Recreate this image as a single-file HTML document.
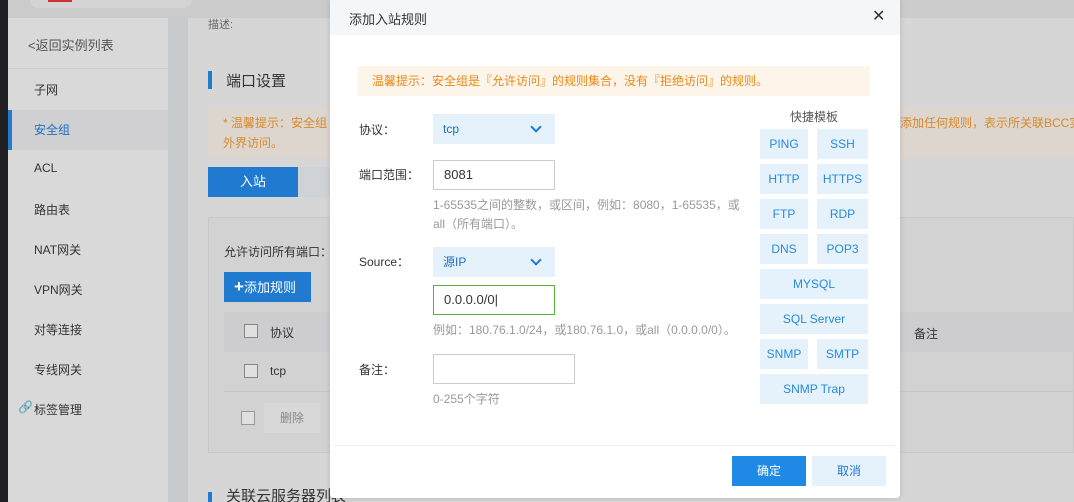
<!DOCTYPE html>
<html><head><meta charset="utf-8"><style>
*{margin:0;padding:0;box-sizing:border-box}
html,body{width:1074px;height:502px;overflow:hidden}
body{position:relative;background:#d6d6d6;font-family:"Liberation Sans","Noto Sans CJK SC",sans-serif;font-size:12px;color:#333}
.a{position:absolute}
.side div.it{position:absolute;left:34px;font-size:12px;color:#333}
.qb{position:absolute;background:#e6f2fb;color:#2a8ad8;font-size:12px;text-align:center;line-height:30px;height:30px}
.chev{position:absolute;width:8px;height:8px;border-right:2px solid #1f7ad0;border-bottom:2px solid #1f7ad0;transform:rotate(45deg)}
</style></head><body>
<div class="a" style="left:0;top:0;width:8px;height:502px;background:#1f1f22"></div>
<div class="a" style="left:8px;top:0;width:1066px;height:18px;background:#cbcbcb"></div>
<div class="a" style="left:30px;top:0;width:162px;height:8px;background:#d4d4d4;border-radius:0 0 8px 8px"></div>
<div class="a" style="left:48px;top:0;width:24px;height:2px;background:#c33"></div>
<div class="a side" style="left:8px;top:18px;width:160px;height:484px;background:#d9d9d9">
 <div class="it" style="left:20px;top:17px;font-size:13px;color:#555">&lt;返回实例列表</div>
 <div class="a" style="left:0;top:50px;width:160px;height:1px;background:#ccc"></div>
 <div class="it" style="left:26px;top:63px">子网</div>
 <div class="a" style="left:0;top:92px;width:160px;height:40px;background:#d0d0d2"></div>
 <div class="a" style="left:0;top:92px;width:4px;height:40px;background:#1f7ad0"></div>
 <div class="it" style="left:26px;top:103px;color:#1f6fbf">安全组</div>
 <div class="it" style="left:26px;top:143px">ACL</div>
 <div class="it" style="left:26px;top:183px">路由表</div>
 <div class="it" style="left:26px;top:223px">NAT网关</div>
 <div class="it" style="left:26px;top:263px">VPN网关</div>
 <div class="it" style="left:26px;top:303px">对等连接</div>
 <div class="it" style="left:26px;top:343px">专线网关</div>
 <div class="it" style="left:10px;top:382px;color:#777">&#128279;</div>
 <div class="it" style="left:26px;top:383px">标签管理</div>
</div>
<div class="a" style="left:168px;top:18px;width:20px;height:484px;background:#c9cacc"></div>
<div class="a" style="left:208px;top:16px;font-size:11px;color:#666">描述:</div>
<div class="a" style="left:208px;top:71px;width:4px;height:18px;background:#1f7ad0"></div>
<div class="a" style="left:226px;top:70px;font-size:15px;color:#333">端口设置</div>
<div class="a" style="left:208px;top:108px;width:866px;height:50px;background:#ddd6cf"></div>
<div class="a" style="left:223px;top:114px;color:#d88a2a">* 温馨提示：安全组</div>
<div class="a" style="left:223px;top:134px;color:#d88a2a">外界访问。</div>
<div class="a" style="left:900px;top:114px;color:#d88a2a;white-space:nowrap">添加任何规则，表示所关联BCC实</div>
<div class="a" style="left:208px;top:167px;width:90px;height:30px;background:#1f7ad0;color:#fff;text-align:center;line-height:30px;font-size:13px">入站</div>
<div class="a" style="left:298px;top:167px;width:40px;height:30px;background:#cfd2d6"></div>
<div class="a" style="left:208px;top:217px;width:866px;height:236px;background:#d2d2d2;border:1px solid #c8c8c8"></div>
<div class="a" style="left:224px;top:243px">允许访问所有端口：</div>
<div class="a" style="left:224px;top:272px;width:87px;height:30px;background:#1f7ad0;color:#fff;line-height:30px;font-size:13px;padding-left:10px"><b style="font-size:17px">+</b>添加规则</div>
<div class="a" style="left:224px;top:312px;width:850px;height:40px;background:#cdcdcf"></div>
<div class="a" style="left:224px;top:352px;width:850px;height:40px;border-bottom:1px solid #c6c6c6"></div>
<div class="a" style="left:244px;top:324px;width:14px;height:14px;border:1px solid #888;background:#e0e0e0"></div>
<div class="a" style="left:270px;top:324px">协议</div>
<div class="a" style="left:244px;top:364px;width:14px;height:14px;border:1px solid #888;background:#e0e0e0"></div>
<div class="a" style="left:270px;top:364px">tcp</div>
<div class="a" style="left:241px;top:411px;width:14px;height:14px;border:1px solid #999;background:#e0e0e0"></div>
<div class="a" style="left:264px;top:403px;width:56px;height:30px;background:#d8d8d8;color:#888;line-height:30px;text-align:center">删除</div>
<div class="a" style="left:914px;top:325px">备注</div>
<div class="a" style="left:208px;top:492px;width:4px;height:10px;background:#1f7ad0"></div>
<div class="a" style="left:226px;top:490px;font-size:15px;line-height:14px">关联云服务器列表</div>

<div class="a" style="left:330px;top:0;width:570px;height:498px;background:#fff;border-radius:0 0 4px 4px;box-shadow:0 0 6px rgba(0,0,0,.15)">
 <div class="a" style="left:0;top:0;width:570px;height:35px;background:#f5f6f8"></div>
 <div class="a" style="left:19px;top:9px;font-size:13px;color:#333">添加入站规则</div>
 <div class="a" style="left:542px;top:6px;font-size:16px;color:#333">✕</div>
 <div class="a" style="left:28px;top:66px;width:512px;height:30px;background:#fdf4ea;color:#e88a1a;line-height:30px;padding-left:14px">温馨提示：安全组是『允许访问』的规则集合，没有『拒绝访问』的规则。</div>
 <div class="a" style="left:29px;top:121px">协议：</div>
 <div class="a" style="left:103px;top:114px;width:122px;height:30px;background:#e6f2fb;color:#1f6fbf;line-height:30px;padding-left:10px">tcp</div>
 <div class="chev" style="left:202px;top:123px"></div>
 <div class="a" style="left:29px;top:166px">端口范围：</div>
 <div class="a" style="left:103px;top:160px;width:122px;height:30px;border:1px solid #ccc;line-height:28px;padding-left:10px;font-size:13px">8081</div>
 <div class="a" style="left:103px;top:196px;width:312px;color:#999;line-height:19px">1-65535之间的整数，或区间，例如：8080，1-65535，或all（所有端口）。</div>
 <div class="a" style="left:29px;top:253px">Source：</div>
 <div class="a" style="left:103px;top:247px;width:122px;height:30px;background:#e6f2fb;color:#1f6fbf;line-height:30px;padding-left:10px">源IP</div>
 <div class="chev" style="left:202px;top:256px"></div>
 <div class="a" style="left:103px;top:285px;width:122px;height:30px;border:1px solid #5bb03a;line-height:28px;padding-left:10px;font-size:13px">0.0.0.0/0|</div>
 <div class="a" style="left:103px;top:321px;color:#999;white-space:nowrap">例如：180.76.1.0/24，或180.76.1.0，或all（0.0.0.0/0）。</div>
 <div class="a" style="left:29px;top:361px">备注：</div>
 <div class="a" style="left:103px;top:354px;width:142px;height:30px;border:1px solid #ccc"></div>
 <div class="a" style="left:103px;top:390px;color:#999">0-255个字符</div>
 <div class="a" style="left:460px;top:108px;color:#555">快捷模板</div>
 <div class="qb" style="left:430px;top:129px;width:48px">PING</div>
 <div class="qb" style="left:487px;top:129px;width:51px">SSH</div>
 <div class="qb" style="left:430px;top:164px;width:48px">HTTP</div>
 <div class="qb" style="left:487px;top:164px;width:51px">HTTPS</div>
 <div class="qb" style="left:430px;top:199px;width:48px">FTP</div>
 <div class="qb" style="left:487px;top:199px;width:51px">RDP</div>
 <div class="qb" style="left:430px;top:234px;width:48px">DNS</div>
 <div class="qb" style="left:487px;top:234px;width:51px">POP3</div>
 <div class="qb" style="left:430px;top:269px;width:108px">MYSQL</div>
 <div class="qb" style="left:430px;top:304px;width:108px">SQL Server</div>
 <div class="qb" style="left:430px;top:339px;width:48px">SNMP</div>
 <div class="qb" style="left:487px;top:339px;width:51px">SMTP</div>
 <div class="qb" style="left:430px;top:374px;width:108px">SNMP Trap</div>
 <div class="a" style="left:4px;top:445px;width:560px;height:1px;background:#eee"></div>
 <div class="a" style="left:402px;top:456px;width:74px;height:30px;background:#1f8ae6;color:#fff;text-align:center;line-height:30px">确定</div>
 <div class="a" style="left:482px;top:456px;width:74px;height:30px;background:#e6f2fb;color:#1f7ad0;text-align:center;line-height:30px">取消</div>
</div>
</body></html>
